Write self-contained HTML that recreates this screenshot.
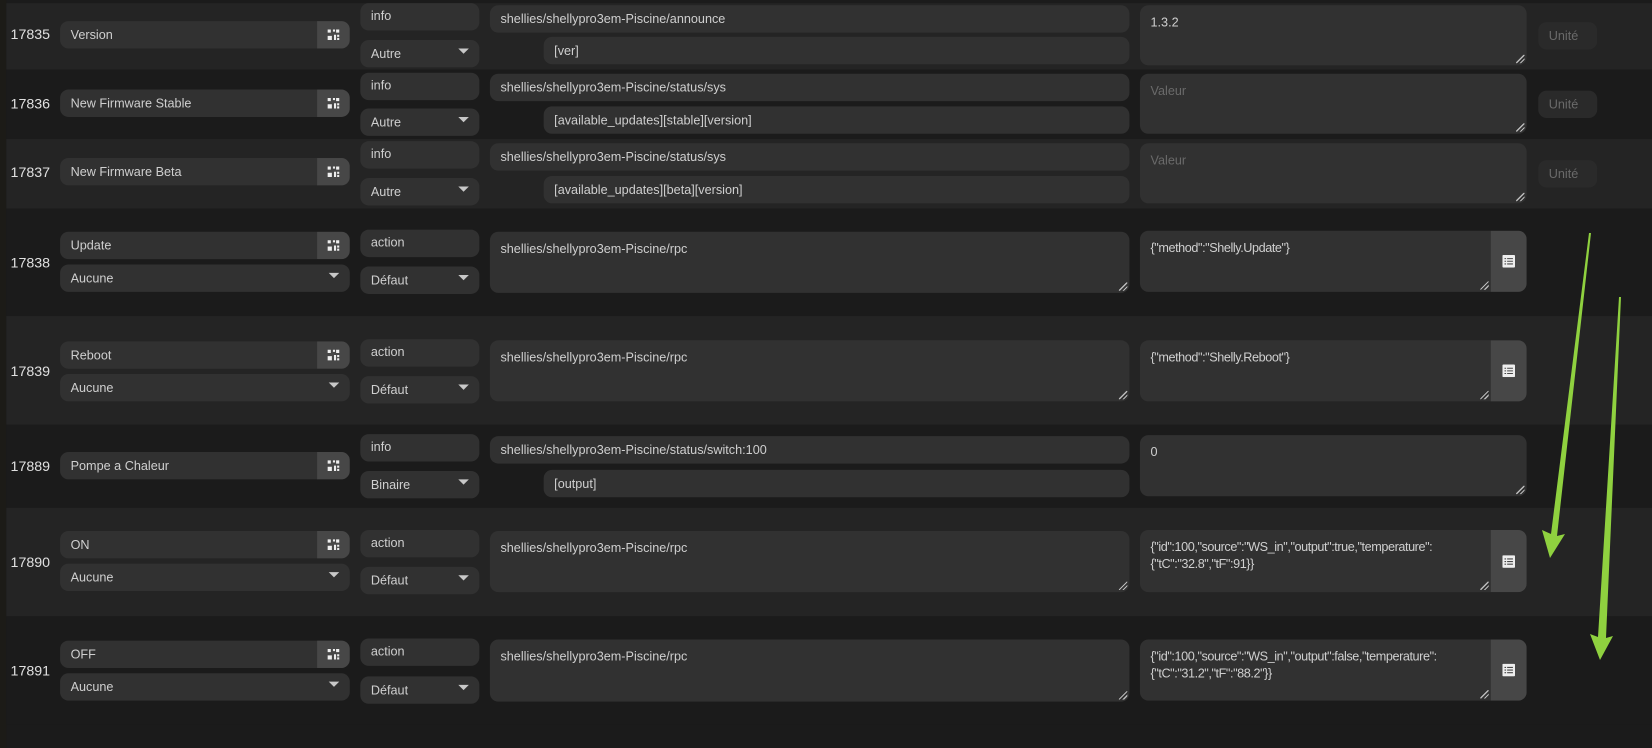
<!DOCTYPE html>
<html><head><meta charset="utf-8"><style>
html,body{margin:0;padding:0;background:#1b1b1b;width:1652px;height:748px;overflow:hidden}
#w{position:absolute;left:0;top:0;width:1568px;height:710px;transform:scale(1.05357);transform-origin:0 0;font-family:"Liberation Sans",sans-serif;font-size:12px;color:#cfcfcf}
.row{position:absolute;left:6px;width:1562px}
.L{background:#242424}.D{background:#1b1b1b}
.id{position:absolute;left:10px;font-size:13.5px;color:#e0e0e0}
.f{position:absolute;background:#313131;border-radius:8px;box-sizing:border-box;padding-left:10px;white-space:nowrap;overflow:hidden}
.s{height:26px;line-height:26px}
.t{padding-top:8px;line-height:16px;padding-left:10px}
.ph{color:#6a6a6a}
.u{background:#2a2a2a}
.v{letter-spacing:-0.4px}
.ic{position:absolute;right:0;top:0;width:31px;height:100%;background:#474747}
.ic svg{position:absolute;left:9px;top:50%;margin-top:-6px}
.dd::after{content:"";position:absolute;right:10px;top:50%;margin-top:-5px;border-left:5px solid transparent;border-right:5px solid transparent;border-top:5px solid #c8c8c8}
.g{position:absolute;right:2px;bottom:2px;width:8px;height:8px;background:linear-gradient(135deg,transparent 45%,#bbb 45%,#bbb 55%,transparent 55%,transparent 70%,#bbb 70%,#bbb 80%,transparent 80%)}
.btn{position:absolute;right:0;top:0;width:34px;height:100%;background:#474747}
.btn svg{position:absolute;left:11px;top:50%;margin-top:-6px}
</style></head><body>
<div id="w">
<div style="position:absolute;left:0;top:0;width:6px;height:710px;background:#1c1b17"></div>
<div class="row L" style="top:3px;height:63px"></div>
<div class="row D" style="top:66px;height:66px"></div>
<div class="row L" style="top:132px;height:66px"></div>
<div class="row D" style="top:198px;height:102px"></div>
<div class="row L" style="top:300px;height:103px"></div>
<div class="row D" style="top:403px;height:79px"></div>
<div class="row L" style="top:482px;height:103px"></div>
<div class="row D" style="top:585px;height:103px"></div>

<div class="id" style="top:25px">17835</div>
<div class="f s" style="left:57px;top:20px;width:275px">Version<div class="ic"><svg width="13" height="12" viewBox="0 0 13 12"><path d="M1 1h3v3H1zM6 1h2v2H6zM9 1h3v3H9zM1 7h4v4H1zM7 6h2v5H7zM10 6h2v2h-2zM10 9h2v2h-2z" fill="#eee"/></svg></div></div>
<div class="f s" style="left:342px;top:3px;width:113px;line-height:24px">info</div>
<div class="f s dd" style="left:342px;top:38px;width:113px">Autre</div>
<div class="f s" style="left:465px;top:5px;width:607px">shellies/shellypro3em-Piscine/announce</div>
<div class="f s" style="left:516px;top:35px;width:556px">[ver]</div>
<div class="f t" style="left:1082px;top:5px;width:367px;height:57px">1.3.2<div class="g"></div></div>
<div class="f s u ph" style="left:1460px;top:21px;width:56px">Unité</div>

<div class="id" style="top:91px">17836</div>
<div class="f s" style="left:57px;top:85px;width:275px">New Firmware Stable<div class="ic"><svg width="13" height="12" viewBox="0 0 13 12"><path d="M1 1h3v3H1zM6 1h2v2H6zM9 1h3v3H9zM1 7h4v4H1zM7 6h2v5H7zM10 6h2v2h-2zM10 9h2v2h-2z" fill="#eee"/></svg></div></div>
<div class="f s" style="left:342px;top:69px;width:113px;line-height:24px">info</div>
<div class="f s dd" style="left:342px;top:103px;width:113px">Autre</div>
<div class="f s" style="left:465px;top:70px;width:607px">shellies/shellypro3em-Piscine/status/sys</div>
<div class="f s" style="left:516px;top:101px;width:556px">[available_updates][stable][version]</div>
<div class="f t ph" style="left:1082px;top:70px;width:367px;height:57px">Valeur<div class="g"></div></div>
<div class="f s u ph" style="left:1460px;top:86px;width:56px">Unité</div>

<div class="id" style="top:156px">17837</div>
<div class="f s" style="left:57px;top:150px;width:275px">New Firmware Beta<div class="ic"><svg width="13" height="12" viewBox="0 0 13 12"><path d="M1 1h3v3H1zM6 1h2v2H6zM9 1h3v3H9zM1 7h4v4H1zM7 6h2v5H7zM10 6h2v2h-2zM10 9h2v2h-2z" fill="#eee"/></svg></div></div>
<div class="f s" style="left:342px;top:134px;width:113px;line-height:24px">info</div>
<div class="f s dd" style="left:342px;top:169px;width:113px">Autre</div>
<div class="f s" style="left:465px;top:136px;width:607px">shellies/shellypro3em-Piscine/status/sys</div>
<div class="f s" style="left:516px;top:167px;width:556px">[available_updates][beta][version]</div>
<div class="f t ph" style="left:1082px;top:136px;width:367px;height:57px">Valeur<div class="g"></div></div>
<div class="f s u ph" style="left:1460px;top:152px;width:56px">Unité</div>

<div class="id" style="top:242px">17838</div>
<div class="f s" style="left:57px;top:220px;width:275px">Update<div class="ic"><svg width="13" height="12" viewBox="0 0 13 12"><path d="M1 1h3v3H1zM6 1h2v2H6zM9 1h3v3H9zM1 7h4v4H1zM7 6h2v5H7zM10 6h2v2h-2zM10 9h2v2h-2z" fill="#eee"/></svg></div></div>
<div class="f s dd" style="left:57px;top:251px;width:275px">Aucune</div>
<div class="f s" style="left:342px;top:218px;width:113px;line-height:24px">action</div>
<div class="f s dd" style="left:342px;top:253px;width:113px">Défaut</div>
<div class="f t" style="left:465px;top:220px;width:607px;height:58px">shellies/shellypro3em-Piscine/rpc<div class="g"></div></div>
<div class="f t v" style="left:1082px;top:219px;width:367px;height:58px">{"method":"Shelly.Update"}<div class="g" style="right:36px"></div><div class="btn"><svg width="12" height="12" viewBox="0 0 12 12"><rect width="12" height="12" rx="1" fill="#eee"/><path d="M2 3h1.5v1H2zM4.5 3H10v1H4.5zM2 5.5h1.5v1H2zM4.5 5.5H10v1H4.5zM2 8h1.5v1H2zM4.5 8H10v1H4.5z" fill="#474747"/></svg></div></div>

<div class="id" style="top:345px">17839</div>
<div class="f s" style="left:57px;top:324px;width:275px">Reboot<div class="ic"><svg width="13" height="12" viewBox="0 0 13 12"><path d="M1 1h3v3H1zM6 1h2v2H6zM9 1h3v3H9zM1 7h4v4H1zM7 6h2v5H7zM10 6h2v2h-2zM10 9h2v2h-2z" fill="#eee"/></svg></div></div>
<div class="f s dd" style="left:57px;top:355px;width:275px">Aucune</div>
<div class="f s" style="left:342px;top:322px;width:113px;line-height:24px">action</div>
<div class="f s dd" style="left:342px;top:357px;width:113px">Défaut</div>
<div class="f t" style="left:465px;top:323px;width:607px;height:58px">shellies/shellypro3em-Piscine/rpc<div class="g"></div></div>
<div class="f t v" style="left:1082px;top:323px;width:367px;height:58px">{"method":"Shelly.Reboot"}<div class="g" style="right:36px"></div><div class="btn"><svg width="12" height="12" viewBox="0 0 12 12"><rect width="12" height="12" rx="1" fill="#eee"/><path d="M2 3h1.5v1H2zM4.5 3H10v1H4.5zM2 5.5h1.5v1H2zM4.5 5.5H10v1H4.5zM2 8h1.5v1H2zM4.5 8H10v1H4.5z" fill="#474747"/></svg></div></div>

<div class="id" style="top:435px">17889</div>
<div class="f s" style="left:57px;top:429px;width:275px">Pompe a Chaleur<div class="ic"><svg width="13" height="12" viewBox="0 0 13 12"><path d="M1 1h3v3H1zM6 1h2v2H6zM9 1h3v3H9zM1 7h4v4H1zM7 6h2v5H7zM10 6h2v2h-2zM10 9h2v2h-2z" fill="#eee"/></svg></div></div>
<div class="f s" style="left:342px;top:412px;width:113px;line-height:24px">info</div>
<div class="f s dd" style="left:342px;top:447px;width:113px">Binaire</div>
<div class="f s" style="left:465px;top:414px;width:607px">shellies/shellypro3em-Piscine/status/switch:100</div>
<div class="f s" style="left:516px;top:446px;width:556px">[output]</div>
<div class="f t" style="left:1082px;top:413px;width:367px;height:58px">0<div class="g"></div></div>

<div class="id" style="top:526px">17890</div>
<div class="f s" style="left:57px;top:504px;width:275px">ON<div class="ic"><svg width="13" height="12" viewBox="0 0 13 12"><path d="M1 1h3v3H1zM6 1h2v2H6zM9 1h3v3H9zM1 7h4v4H1zM7 6h2v5H7zM10 6h2v2h-2zM10 9h2v2h-2z" fill="#eee"/></svg></div></div>
<div class="f s dd" style="left:57px;top:535px;width:275px">Aucune</div>
<div class="f s" style="left:342px;top:503px;width:113px;line-height:24px">action</div>
<div class="f s dd" style="left:342px;top:538px;width:113px">Défaut</div>
<div class="f t" style="left:465px;top:504px;width:607px;height:58px">shellies/shellypro3em-Piscine/rpc<div class="g"></div></div>
<div class="f t v" style="left:1082px;top:503px;width:367px;height:59px;white-space:normal;padding-right:40px">{"id":100,"source":"WS_in","output":true,"temperature":<br>{"tC":"32.8","tF":91}}<div class="g" style="right:36px"></div><div class="btn"><svg width="12" height="12" viewBox="0 0 12 12"><rect width="12" height="12" rx="1" fill="#eee"/><path d="M2 3h1.5v1H2zM4.5 3H10v1H4.5zM2 5.5h1.5v1H2zM4.5 5.5H10v1H4.5zM2 8h1.5v1H2zM4.5 8H10v1H4.5z" fill="#474747"/></svg></div></div>

<div class="id" style="top:629px">17891</div>
<div class="f s" style="left:57px;top:608px;width:275px">OFF<div class="ic"><svg width="13" height="12" viewBox="0 0 13 12"><path d="M1 1h3v3H1zM6 1h2v2H6zM9 1h3v3H9zM1 7h4v4H1zM7 6h2v5H7zM10 6h2v2h-2zM10 9h2v2h-2z" fill="#eee"/></svg></div></div>
<div class="f s dd" style="left:57px;top:639px;width:275px">Aucune</div>
<div class="f s" style="left:342px;top:606px;width:113px;line-height:24px">action</div>
<div class="f s dd" style="left:342px;top:642px;width:113px">Défaut</div>
<div class="f t" style="left:465px;top:607px;width:607px;height:59px">shellies/shellypro3em-Piscine/rpc<div class="g"></div></div>
<div class="f t v" style="left:1082px;top:607px;width:367px;height:58px;white-space:normal;padding-right:40px">{"id":100,"source":"WS_in","output":false,"temperature":<br>{"tC":"31.2","tF":"88.2"}}<div class="g" style="right:36px"></div><div class="btn"><svg width="12" height="12" viewBox="0 0 12 12"><rect width="12" height="12" rx="1" fill="#eee"/><path d="M2 3h1.5v1H2zM4.5 3H10v1H4.5zM2 5.5h1.5v1H2zM4.5 5.5H10v1H4.5zM2 8h1.5v1H2zM4.5 8H10v1H4.5z" fill="#474747"/></svg></div></div>
</div>
<svg style="position:absolute;left:0;top:0" width="1652" height="748">
<path d="M1589 233 L1591 233 L1557 536 L1565 534 L1550 558 L1542 530 L1551 534 Z" fill="#8fd13f"/>
<path d="M1619 297 L1621 297 L1606 638 L1613 636 L1600 660 L1590 634 L1598 637 Z" fill="#8fd13f"/>
</svg>
</body></html>
